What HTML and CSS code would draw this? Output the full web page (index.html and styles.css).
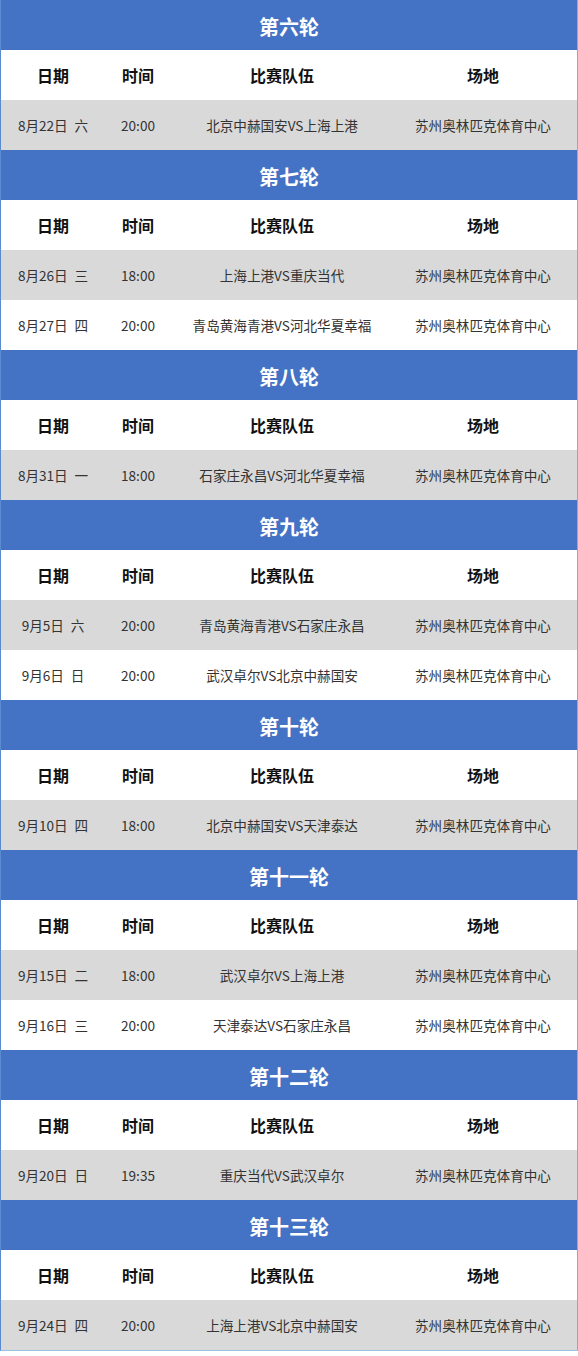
FILE: index.html
```html
<!DOCTYPE html>
<html lang="zh-CN">
<head>
<meta charset="utf-8">
<title>赛程</title>
<link rel="stylesheet" href="styles.css">
</head>
<body>
<div class="schedule">
  <div class="round">第六轮</div>
  <div class="row labels"><span>日期</span><span>时间</span><span>比赛队伍</span><span>场地</span></div>
  <div class="row data grey"><span>8月22日&ensp;六</span><span>20:00</span><span>北京中赫国安VS上海上港</span><span>苏州奥林匹克体育中心</span></div>

  <div class="round">第七轮</div>
  <div class="row labels"><span>日期</span><span>时间</span><span>比赛队伍</span><span>场地</span></div>
  <div class="row data grey"><span>8月26日&ensp;三</span><span>18:00</span><span>上海上港VS重庆当代</span><span>苏州奥林匹克体育中心</span></div>
  <div class="row data"><span>8月27日&ensp;四</span><span>20:00</span><span>青岛黄海青港VS河北华夏幸福</span><span>苏州奥林匹克体育中心</span></div>

  <div class="round">第八轮</div>
  <div class="row labels"><span>日期</span><span>时间</span><span>比赛队伍</span><span>场地</span></div>
  <div class="row data grey"><span>8月31日&ensp;一</span><span>18:00</span><span>石家庄永昌VS河北华夏幸福</span><span>苏州奥林匹克体育中心</span></div>

  <div class="round">第九轮</div>
  <div class="row labels"><span>日期</span><span>时间</span><span>比赛队伍</span><span>场地</span></div>
  <div class="row data grey"><span>9月5日&ensp;六</span><span>20:00</span><span>青岛黄海青港VS石家庄永昌</span><span>苏州奥林匹克体育中心</span></div>
  <div class="row data"><span>9月6日&ensp;日</span><span>20:00</span><span>武汉卓尔VS北京中赫国安</span><span>苏州奥林匹克体育中心</span></div>

  <div class="round">第十轮</div>
  <div class="row labels"><span>日期</span><span>时间</span><span>比赛队伍</span><span>场地</span></div>
  <div class="row data grey"><span>9月10日&ensp;四</span><span>18:00</span><span>北京中赫国安VS天津泰达</span><span>苏州奥林匹克体育中心</span></div>

  <div class="round">第十一轮</div>
  <div class="row labels"><span>日期</span><span>时间</span><span>比赛队伍</span><span>场地</span></div>
  <div class="row data grey"><span>9月15日&ensp;二</span><span>18:00</span><span>武汉卓尔VS上海上港</span><span>苏州奥林匹克体育中心</span></div>
  <div class="row data"><span>9月16日&ensp;三</span><span>20:00</span><span>天津泰达VS石家庄永昌</span><span>苏州奥林匹克体育中心</span></div>

  <div class="round">第十二轮</div>
  <div class="row labels"><span>日期</span><span>时间</span><span>比赛队伍</span><span>场地</span></div>
  <div class="row data grey"><span>9月20日&ensp;日</span><span>19:35</span><span>重庆当代VS武汉卓尔</span><span>苏州奥林匹克体育中心</span></div>

  <div class="round">第十三轮</div>
  <div class="row labels"><span>日期</span><span>时间</span><span>比赛队伍</span><span>场地</span></div>
  <div class="row data grey"><span>9月24日&ensp;四</span><span>20:00</span><span>上海上港VS北京中赫国安</span><span>苏州奥林匹克体育中心</span></div>
</div>
</body>
</html>
```

FILE: styles.css
```css
html, body {
  margin: 0;
  padding: 0;
  background: #ffffff;
}

body {
  font-family: "Noto Sans CJK SC", "Noto Sans", sans-serif;
}

.schedule {
  width: 576px;
  border-left: 1px solid #5a8ad0;
  border-right: 1px solid #8fa9c6;
  border-bottom: 1px solid #9cc0e0;
}

.round {
  height: 50px;
  background: #4472c4;
  color: #ffffff;
  font-size: 20px;
  font-weight: 700;
  display: flex;
  align-items: center;
  justify-content: center;
  padding-top: 2px;
  box-sizing: border-box;
}

.row {
  height: 50px;
  display: grid;
  grid-template-columns: 104px 66px 222px 180px;
  align-items: center;
  background: #ffffff;
}

.row span {
  text-align: center;
  white-space: nowrap;
}

.labels span {
  font-size: 16px;
  font-weight: 700;
  color: #111111;
}

.data span {
  font-size: 13.6px;
  color: #333333;
  font-variant-numeric: tabular-nums;
}

.data.grey {
  background: #d9d9d9;
}
```
